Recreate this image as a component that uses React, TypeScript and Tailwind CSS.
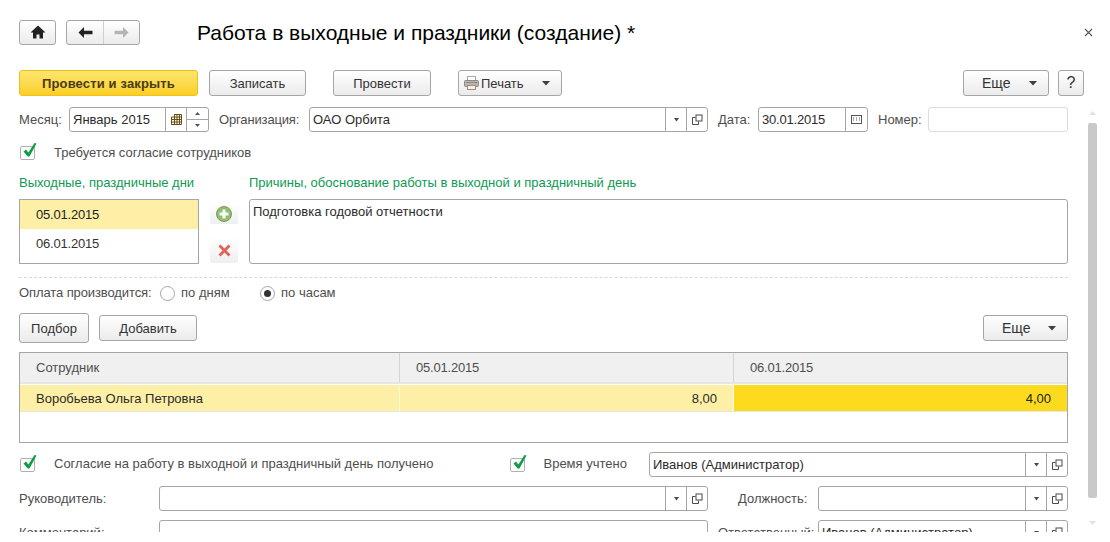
import React from "react";

const Caret = ({ small }: { small?: boolean }) =>
  small ? (
    <svg width="7" height="4" viewBox="0 0 7 4"><path d="M1 0h5L3.5 3.5z" fill="#4a4a4a" /></svg>
  ) : (
    <svg width="9" height="5" viewBox="0 0 9 5"><path d="M0 0h8L4 4.5z" fill="#3f3f3f" /></svg>
  );

const OpenIcon = () => (
  <svg width="11" height="11" viewBox="0 0 11 11" fill="none" stroke="#4a4a4a">
    <path d="M3.5 3.5H.5v7h6V7.5" />
    <rect x="4" y="1" width="6" height="6" fill="#fff" stroke="#4a4a4a" />
  </svg>
);

const Check = () => (
  <span className="relative block ml-[1px] mt-[1px] w-[15px] h-[14px] border border-[#b0b0b0] rounded-[2px] bg-white shrink-0">
    <svg className="absolute left-[1px] top-[-5px]" width="16" height="17" viewBox="0 0 16 17">
      <path d="M1.5 9.5l2.5-2 2.4 3L12.5 1l2 .6-7 13H5.6z" fill="#0f9d4a" />
    </svg>
  </span>
);

const base =
  "flex items-center justify-center rounded-[3px] border border-[#a6a6a6] bg-gradient-to-b from-white to-[#ebebeb] text-[#333] shrink-0";

function Btn({ w, h = "h-[26px]", children }: { w: string; h?: string; children: React.ReactNode }) {
  return <div className={`${base} ${w} ${h}`}>{children}</div>;
}

function Field({
  w,
  text,
  drop,
  open,
  tight,
  children,
}: {
  w: string;
  text?: string;
  drop?: boolean;
  open?: boolean;
  tight?: boolean;
  children?: React.ReactNode;
}) {
  return (
    <div className={`flex h-[25px] ${w} border border-[#a6a6a6] rounded-[3px] bg-white shrink-0 overflow-hidden`}>
      <div className={`flex-1 min-w-0 pl-[3px] leading-[23px] text-[#2b2b2b] whitespace-nowrap ${tight ? "tracking-[-0.2px]" : ""}`}>{text}</div>
      {drop && (
        <div className="w-[21px] border-l border-[#a6a6a6] flex items-center justify-center">
          <Caret small />
        </div>
      )}
      {open && (
        <div className="w-[21px] border-l border-[#a6a6a6] flex items-center justify-center">
          <OpenIcon />
        </div>
      )}
      {children}
    </div>
  );
}

const Label = ({ className = "", children }: { className?: string; children: React.ReactNode }) => (
  <div className={`text-[#4e4e4e] whitespace-nowrap shrink-0 ${className}`}>{children}</div>
);

export default function App() {
  return (
    <div className="relative w-[1110px] h-[542px] overflow-hidden bg-white text-[13px] font-['Liberation_Sans',Arial,sans-serif]">
      <div className="h-[532px] overflow-hidden pl-[19px] pt-[19px]">
        {/* title row */}
        <div className="flex items-center h-[26px] w-[1074px]">
          <Btn w="w-[37px]" h="h-[25px]">
            <svg width="16" height="14" viewBox="0 0 16 14">
              <path d="M8 0.5L0.5 7.5H3v6h3.5V9.5h3v4H13v-6h2.5z" fill="#222" />
            </svg>
          </Btn>
          <div className={`${base} ml-[10px] w-[74px] h-[25px]`}>
            <div className="w-[37px] h-full flex items-center justify-center border-r border-[#cfcfcf]">
              <svg width="15" height="11" viewBox="0 0 15 11">
                <path d="M6 0L0.5 5.5 6 11V7.2h8.5V3.8H6z" fill="#222" />
              </svg>
            </div>
            <div className="flex-1 h-full flex items-center justify-center">
              <svg width="15" height="11" viewBox="0 0 15 11">
                <path d="M9 0l5.5 5.5L9 11V7.2H.5V3.8H9z" fill="#b5b5b5" />
              </svg>
            </div>
          </div>
          <div className="ml-[57px] mt-[2px] text-[21px] leading-[26px] text-black whitespace-nowrap">
            Работа в выходные и праздники (создание) *
          </div>
          <svg className="ml-auto" width="9" height="9" viewBox="0 0 9 9" stroke="#555" strokeWidth="1.1">
            <path d="M1 1l7 7M8 1L1 8" />
          </svg>
        </div>

        {/* toolbar */}
        <div className="flex mt-[25px] w-[1065px]">
          <div className="flex items-center justify-center w-[179px] h-[26px] pt-[1px] rounded-[3px] border border-[#f0c020] bg-gradient-to-b from-[#fde66c] to-[#fbcf20] font-bold text-[#4a3b10] shrink-0 tracking-[0.15px]">
            Провести и закрыть
          </div>
          <Btn w="w-[97px] ml-[11px] pt-[1px]">Записать</Btn>
          <Btn w="w-[98px] ml-[27px] pt-[1px]">Провести</Btn>
          <div className={`${base} w-[104px] ml-[27px] h-[26px] pl-[5px] pr-[10px] !justify-start`}>
            <svg width="15" height="14" viewBox="0 0 15 14">
              <rect x="3.5" y="0.5" width="8" height="5" fill="#fff" stroke="#a8a8a8" />
              <rect x="0.5" y="4.5" width="14" height="6" rx="1" fill="#b5b5b5" stroke="#8a8a8a" />
              <rect x="2" y="6" width="9" height="1" fill="#8f8f8f" />
              <rect x="11" y="6" width="2" height="1" fill="#e0592a" />
              <rect x="3.5" y="9.5" width="8" height="4" fill="#f4efe6" stroke="#a08f80" />
            </svg>
            <span className="ml-[2px] pt-[1px]">Печать</span>
            <span className="ml-auto flex"><Caret /></span>
          </div>
          <div className={`${base} w-[86px] ml-auto h-[26px] pl-[18px] pr-[10px] !justify-between text-[14px]`}>
            <span className="pt-[1px]">Еще</span>
            <Caret />
          </div>
          <Btn w="w-[26px] ml-[9px] text-[16px]">?</Btn>
        </div>

        {/* period row */}
        <div className="flex items-center mt-[11px] w-[1049px]">
          <Label className="w-[50px]">Месяц:</Label>
          <Field w="w-[140px]" text="Январь 2015">
            <div className="w-[21px] border-l border-[#a6a6a6] flex items-center justify-center">
              <svg width="11" height="11" viewBox="0 0 11 11" fill="none" stroke="#6b4f10">
                <path d="M3 .5h7.5v10H.5V3H10.5M.5 5.5h10M.5 8h10M3.5 .5v10M6 .5v10M8.5 .5v10" />
              </svg>
            </div>
            <div className="w-[22px] border-l border-[#a6a6a6] flex flex-col">
              <div className="flex-1 flex items-center justify-center border-b border-[#a6a6a6]">
                <svg width="5" height="3" viewBox="0 0 5 3"><path d="M2.5 0L5 3H0z" fill="#555" /></svg>
              </div>
              <div className="flex-1 flex items-center justify-center">
                <svg width="5" height="3" viewBox="0 0 5 3"><path d="M0 0h5L2.5 3z" fill="#555" /></svg>
              </div>
            </div>
          </Field>
          <Label className="w-[90px] ml-[10px] tracking-[-0.15px]">Организация:</Label>
          <Field w="w-[399px]" text="ОАО Орбита" drop open />
          <Label className="w-[40px] ml-[10px]">Дата:</Label>
          <Field w="w-[110px]" text="30.01.2015" tight>
            <div className="w-[22px] border-l border-[#a6a6a6] flex items-center justify-center">
              <svg width="11" height="9" viewBox="0 0 11 9" fill="none" stroke="#555">
                <rect x="0.5" y="0.5" width="10" height="8" />
                <path d="M2 3h1M5 3h1M8 3h1M2 5h1M5 5h1M8 5h1" />
              </svg>
            </div>
          </Field>
          <Label className="w-[50px] ml-[10px]">Номер:</Label>
          <div className="w-[140px] h-[25px] border border-[#dcdcdc] rounded-[3px] shrink-0" />
        </div>

        {/* consent */}
        <div className="flex items-center mt-[13px] h-[15px]">
          <Check />
          <Label className="ml-[19px]">Требуется согласие сотрудников</Label>
        </div>

        {/* days and reasons */}
        <div className="flex mt-[16px] w-[1049px]">
          <div className="w-[180px] shrink-0">
            <div className="text-[#0d9a52] leading-[14px] whitespace-nowrap">Выходные, праздничные дни</div>
            <div className="mt-[9px] h-[65px] border border-[#a6a6a6] bg-white">
              <div className="h-[29px] bg-[#fdf0a6] pl-[16px] leading-[29px] text-[#222] tracking-[-0.2px]">05.01.2015</div>
              <div className="h-[29px] pl-[16px] leading-[29px] text-[#333] tracking-[-0.2px]">06.01.2015</div>
            </div>
          </div>
          <div className="w-[28px] ml-[11px] mt-[27px] flex flex-col shrink-0">
            <div className="h-[21px] bg-gradient-to-b from-white to-[#efefef] rounded-[2px] flex items-center justify-center">
              <svg width="16" height="16" viewBox="0 0 16 16">
                <circle cx="8" cy="8" r="7.5" fill="#8fbf6a" stroke="#7a9a66" />
                <path d="M6.5 3.5h3v3h3v3h-3v3h-3v-3h-3v-3h3z" fill="#fff" />
              </svg>
            </div>
            <div className="h-[26px] mt-[13px] bg-gradient-to-b from-white to-[#efefef] rounded-[2px] flex items-center justify-center">
              <svg width="13" height="13" viewBox="0 0 13 13">
                <path d="M2.5 .5L6.5 4.5 10.5 .5 12.5 2.5 8.5 6.5 12.5 10.5 10.5 12.5 6.5 8.5 2.5 12.5 .5 10.5 4.5 6.5 .5 2.5z" fill="#e2635c" />
              </svg>
            </div>
          </div>
          <div className="flex-1 ml-[11px]">
            <div className="text-[#0d9a52] leading-[14px] whitespace-nowrap">
              Причины, обоснование работы в выходной и праздничный день
            </div>
            <div className="mt-[9px] h-[65px] border border-[#a6a6a6] rounded-[3px] px-[3px] pt-[4px] leading-[15px] text-[#2b2b2b]">
              Подготовка годовой отчетности
            </div>
          </div>
        </div>

        <div className="mt-[13px] w-[1049px] border-t border-dashed border-[#d9d9d9]" />

        {/* payment */}
        <div className="flex items-center mt-[7px] h-[16px]">
          <Label className="w-[141px] tracking-[-0.1px]">Оплата производится:</Label>
          <span className="w-[15px] h-[15px] rounded-full border border-[#a6a6a6] shrink-0" />
          <Label className="ml-[6px] w-[79px]">по дням</Label>
          <span className="w-[15px] h-[15px] rounded-full border border-[#a6a6a6] flex items-center justify-center shrink-0">
            <span className="w-[7px] h-[7px] rounded-full bg-[#333]" />
          </span>
          <Label className="ml-[6px]">по часам</Label>
        </div>

        {/* table buttons */}
        <div className="flex items-center mt-[12px] h-[30px] w-[1049px]">
          <Btn w="w-[70px] pt-[1px]" h="h-[30px]">Подбор</Btn>
          <Btn w="w-[98px] ml-[10px] pt-[1px]">Добавить</Btn>
          <div className={`${base} w-[85px] ml-auto h-[26px] pl-[18px] pr-[10px] !justify-between text-[14px]`}>
            <span className="pt-[1px]">Еще</span>
            <Caret />
          </div>
        </div>

        {/* table */}
        <div className="mt-[9px] w-[1049px] h-[91px] border border-[#a6a6a6]">
          <div className="flex h-[29px] bg-[#f0f0f0] text-[#4e4e4e] leading-[29px]">
            <div className="w-[380px] pl-[16px] border-r border-[#d4d4d4]">Сотрудник</div>
            <div className="w-[334px] pl-[16px] border-r border-[#d4d4d4] tracking-[-0.2px]">05.01.2015</div>
            <div className="flex-1 pl-[16px] tracking-[-0.2px]">06.01.2015</div>
          </div>
          <div className="h-[2px] bg-[#e6e6e6]" />
          <div className="flex h-[26px] mt-[1px] leading-[27px] text-[#2b2b2b]">
            <div className="w-[380px] pl-[16px] bg-[#fdf0a6] border-r border-[#fff8d0]">Воробьева Ольга Петровна</div>
            <div className="w-[334px] pr-[16px] text-right bg-[#fdf0a6] border-r border-white">8,00</div>
            <div className="flex-1 pr-[16px] text-right bg-[#fcdb1e] text-[#222]">4,00</div>
          </div>
          <div className="h-[1px] bg-[#e6e6e6]" />
        </div>

        {/* consent received */}
        <div className="flex items-center mt-[9px] w-[1049px]">
          <Check />
          <Label className="ml-[19px] -mt-[1px]">Согласие на работу в выходной и праздничный день получено</Label>
          <div className="ml-[76px]"><Check /></div>
          <Label className="ml-[18px] -mt-[1px]">Время учтено</Label>
          <div className="ml-auto"><Field w="w-[419px]" text="Иванов (Администратор)" drop open /></div>
        </div>

        {/* head */}
        <div className="flex items-center mt-[9px] w-[1049px]">
          <Label className="w-[140px]">Руководитель:</Label>
          <Field w="w-[549px]" drop open />
          <Label className="w-[80px] ml-[30px]">Должность:</Label>
          <Field w="w-[250px]" drop open />
        </div>

        {/* comment */}
        <div className="flex items-start mt-[9px] w-[1049px]">
          <Label className="w-[140px] leading-[25px]">Комментарий:</Label>
          <Field w="w-[549px]" />
          <Label className="w-[100px] ml-[10px] leading-[25px]">Ответственный:</Label>
          <Field w="w-[250px]" text="Иванов (Администратор)" drop open />
        </div>
      </div>

      {/* scrollbar */}
      <div className="absolute left-[1088px] top-[123px] w-[9px] h-[375px] bg-[#c9c9c9] rounded-[2px]" />
      <svg className="absolute left-[1089px] top-[111px]" width="7" height="4" viewBox="0 0 7 4"><path d="M3.5 0L7 4H0z" fill="#e3e3e3" /></svg>
      <svg className="absolute left-[1089px] top-[521px]" width="7" height="4" viewBox="0 0 7 4"><path d="M0 0h7L3.5 4z" fill="#e3e3e3" /></svg>
    </div>
  );
}
